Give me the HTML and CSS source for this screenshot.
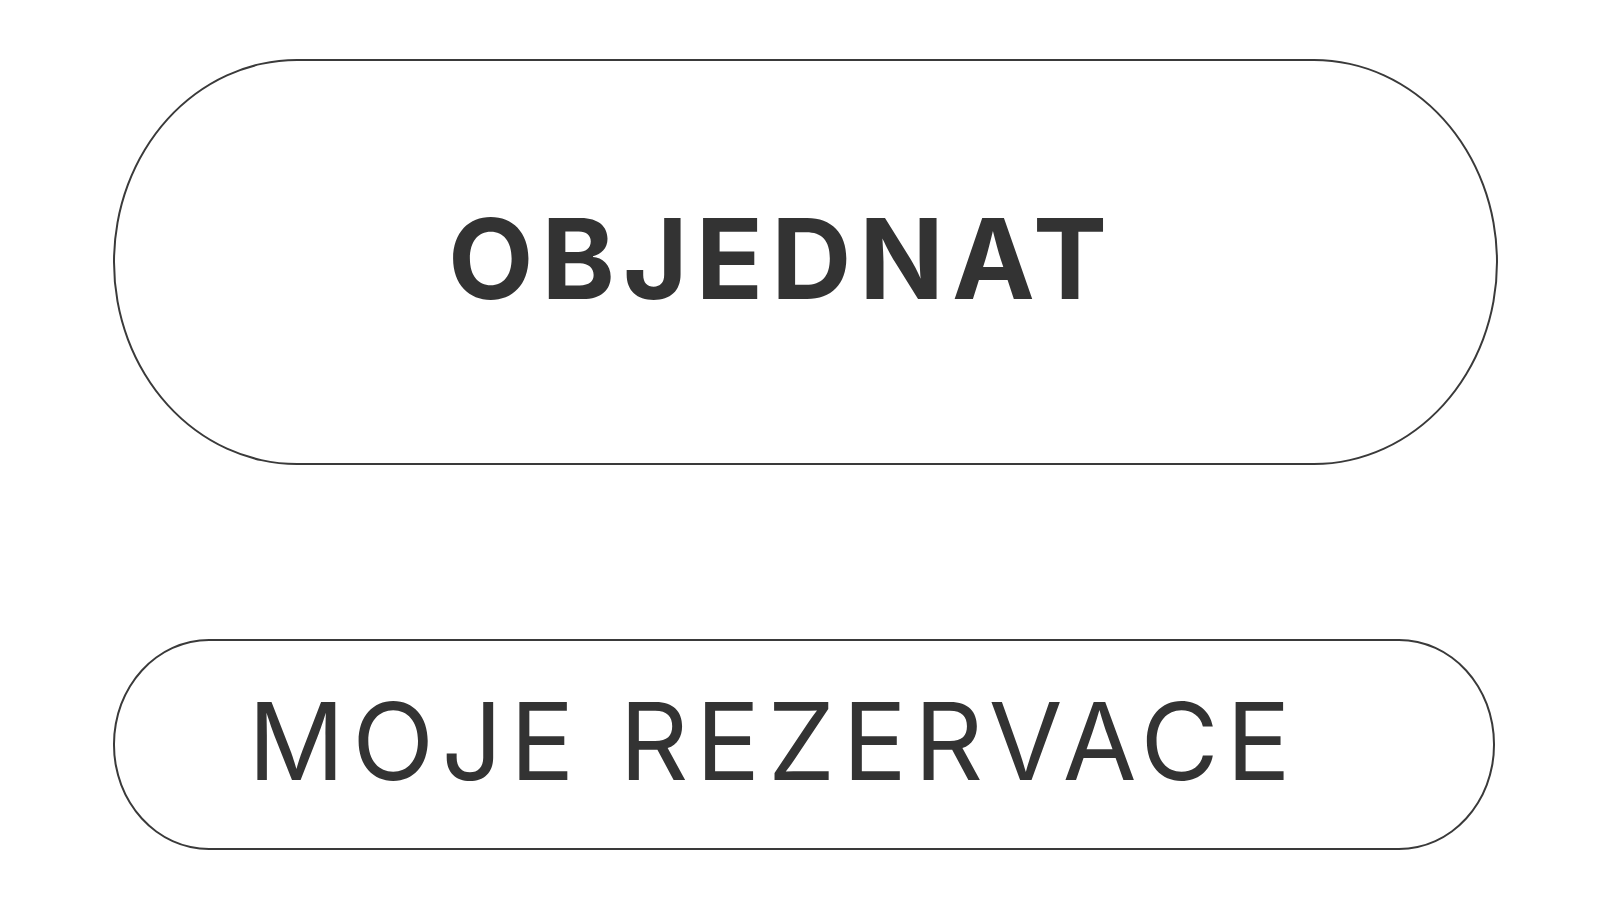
FILE: index.html
```html
<!DOCTYPE html>
<html>
<head>
  <title>Rezervace</title>
  <link rel="stylesheet" href="styles.css">
</head>
<body>
  <div class="actions">
    <a class="btn btn-order" href="#"><span class="label">OBJEDNAT</span></a>
    <a class="btn btn-bookings" href="#"><span class="label">MOJE REZERVACE</span></a>
  </div>
</body>
</html>
```

FILE: styles.css
```css
body {
  margin: 0;
  background-color: #fff;
  font-family: Inter, "Open Sans", Arial, sans-serif;
  color: #333;
}

.actions {
  display: flex;
  flex-direction: column;
  padding: 59px 0 0 113px;
}

.btn {
  display: flex;
  align-items: center;
  justify-content: center;
  box-sizing: border-box;
  border: 2px solid #3a3a3a;
  color: #333;
  text-decoration: none;
  line-height: 1;
}

.btn-order {
  width: 1385px;
  height: 406px;
  padding: 0 48px 8px 0;
  border-radius: 184px / 203px;
  font-size: 111px;
  font-weight: 700;
  letter-spacing: 8px;
}

.btn-bookings {
  width: 1382px;
  height: 211px;
  margin-top: 174px;
  padding: 0 62px 7px 0;
  border-radius: 96px / 105px;
  font-size: 107px;
  font-weight: 400;
  letter-spacing: 7.5px;
}
```
